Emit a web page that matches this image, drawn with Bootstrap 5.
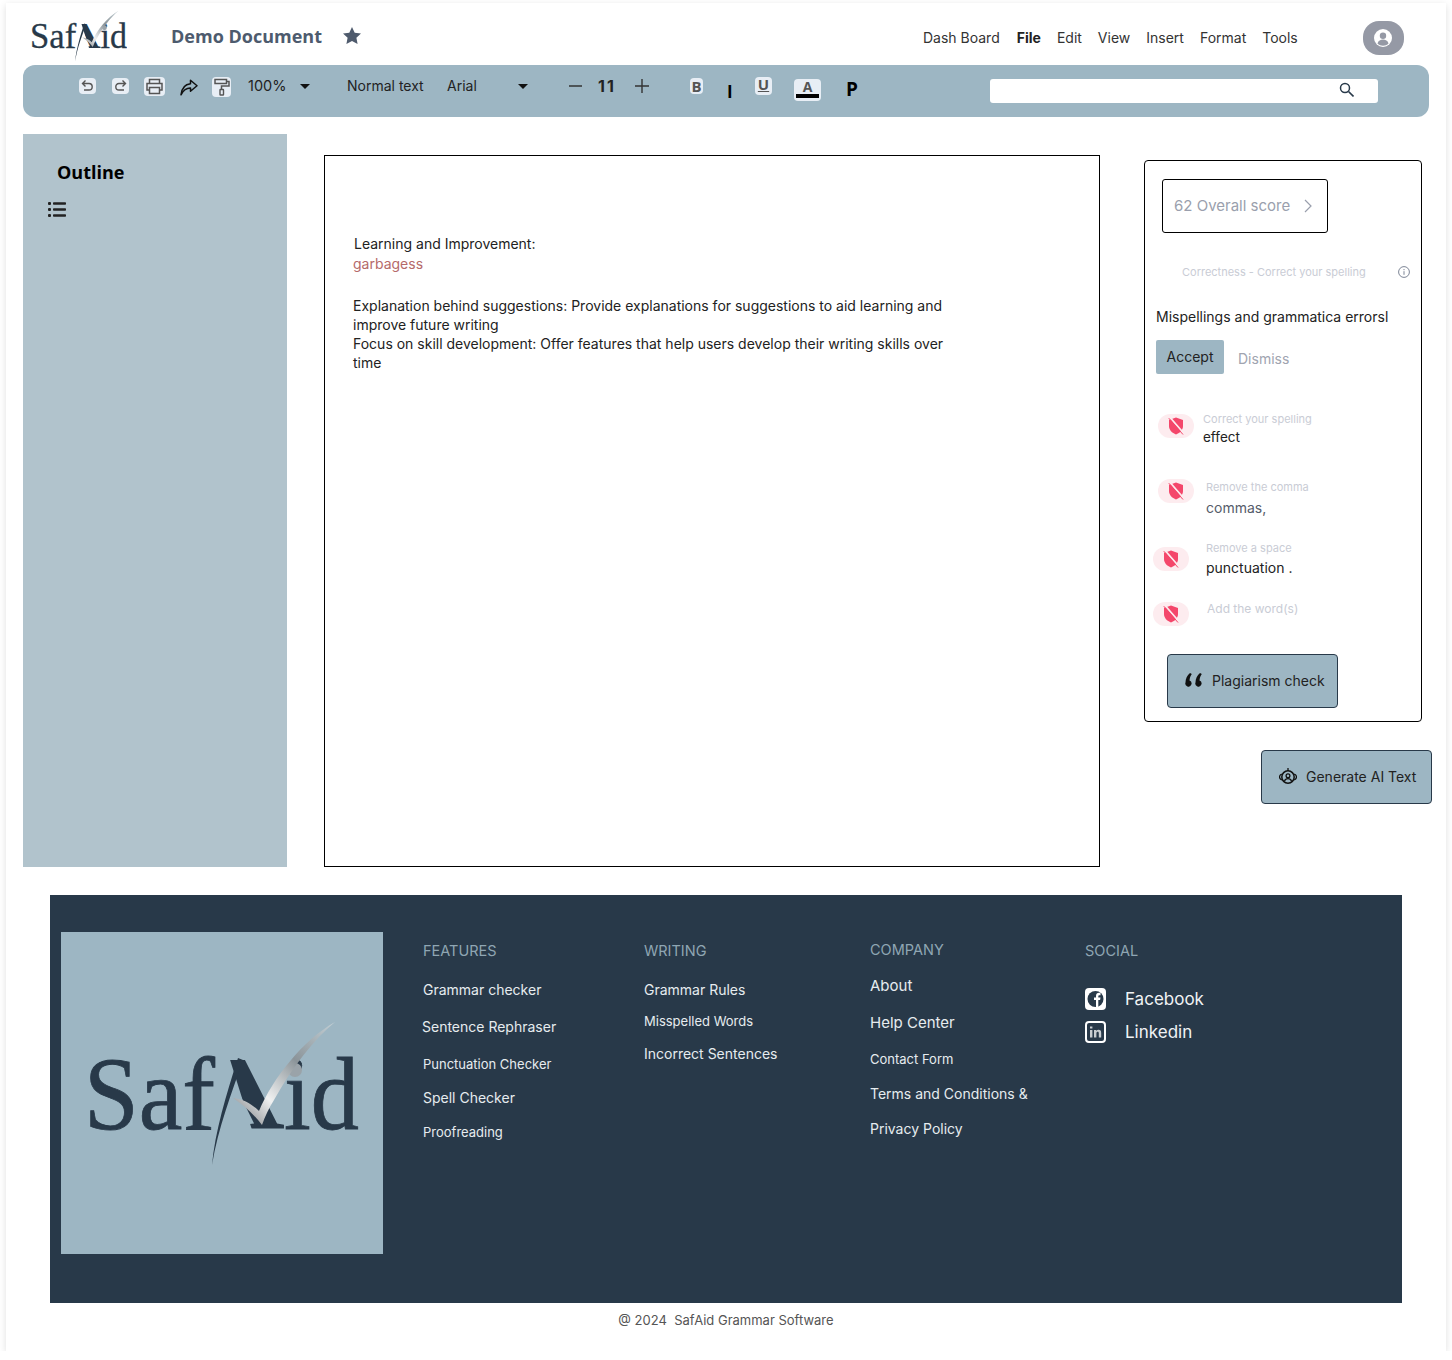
<!DOCTYPE html>
<html lang="en">
<head>
    <meta charset="UTF-8">
    <meta name="viewport" content="width=device-width, initial-scale=1.0">
    <title>SafAid - Demo Document</title>
    <link rel="stylesheet" href="https://cdn.jsdelivr.net/npm/bootstrap@5.3.0/dist/css/bootstrap.min.css">
    <style>
        body { font-family: Inter, sans-serif; background: #fff; color: #222; }
        .page-frame { margin: 3px 6px 0; width: 1440px; height: 1348px; background: #fff; box-shadow: 0 2px 7px rgba(0,0,0,.13); overflow: hidden; }

        .top-head { height: 62px; padding-left: 25px; }
        .head-logo { width: 96px; height: 53px; margin-top: 7px; }
        .doc-title { margin: 20px 0 0 44px; font: 700 18px/26px "Open Sans", sans-serif; color: #4d5b6e; width: 151px; white-space: nowrap; }
        .head-star { margin: 24px 0 0 21px; }
        .top-nav { margin: 25px 0 0 562px; }
        .top-nav .nav-link { padding: 0; font-size: 14px; line-height: 20px; color: #333; }
        .top-nav .nav-link.on { font-weight: 700; color: #222; margin-left: 1px; }
        .avatar-pill { width: 41px; height: 34px; margin: 18px 0 0 65px; background: #9599a5; border-radius: 16px; }

        .tool-bar { margin: 0 17px; height: 52px; background: #9db6c3; border-radius: 12px; }
        .tool-bar > * { flex: none; }
        .tb-txt { font-size: 14px; line-height: 20px; margin-top: 11px; color: #222; white-space: nowrap; }
        .tb-box { background: #e8eef5; border-radius: 4px; }
        .tb-undo { margin: 13px 0 0 56px; }
        .tb-redo { margin: 13px 0 0 16px; }
        .tb-print { margin: 12px 0 0 15px; }
        .tb-share { margin: 14px 0 0 15px; }
        .tb-roller { margin: 12px 0 0 14px; }
        .tb-zoom { margin-left: 17px; width: 38px; font-size: 14.5px; }
        .tb-caret { width: 0; height: 0; border-left: 5px solid transparent; border-right: 5px solid transparent; border-top: 5px solid #111; margin-top: 19px; }
        .tb-caret1 { margin-left: 14px; }
        .tb-style { margin-left: 37px; width: 77px; }
        .tb-font { margin-left: 23px; width: 31px; }
        .tb-caret2 { margin-left: 40px; }
        .tb-minus { margin: 15px 0 0 41px; }
        .tb-size { margin: 11px 0 0 16px; width: 18px; font: 700 16px/20px Inter, sans-serif; letter-spacing: 2px; color: #222; white-space: nowrap; }
        .tb-plus { margin: 14px 0 0 19px; }
        .tb-b { margin: 13px 0 0 41px; width: 13px; height: 16px; font: 700 15px/16px "Open Sans", sans-serif; color: #555; text-align: center; }
        .tb-i { margin: 17px 0 0 24px; width: 4px; font: 700 17px/20px "Open Sans", sans-serif; color: #000; }
        .tb-u { margin: 12px 0 0 24px; width: 17px; height: 18px; font: 700 15px/15px "Open Sans", sans-serif; color: #555; text-align: center; text-decoration: underline; }
        .tb-a { margin: 14px 0 0 22px; width: 27px; height: 22px; font: 700 14px/15px "Open Sans", sans-serif; color: #555; text-align: center; }
        .tb-a i { display: block; height: 4px; margin: 0 2px; background: #000; }
        .tb-p { margin: 12px 0 0 25px; width: 12px; font: 700 19px/24px "Open Sans", sans-serif; color: #000; }
        .tb-search { margin: 14px 0 0 132px; width: 388px; height: 24px; background: #fff; border-radius: 3px; padding: 3px 24px 0 0; }

        .side-panel { margin: 17px 0 0 17px; width: 264px; height: 733px; background: #b1c3cc; padding: 25px 0 0 25px; }
        .side-panel h2 { font: 700 18px/26px "Open Sans", sans-serif; color: #000; margin: 0 0 17px 9px; }
        .doc-sheet { margin: 38px 0 0 37px; width: 776px; height: 712px; border: 1px solid #000; padding: 78px 0 0 28px; font-size: 14px; line-height: 19px; color: #222; }
        .doc-sheet p { margin: 0; width: 600px; }
        .doc-sheet .first-line { margin-left: 1px; }
        .doc-sheet .typo { color: #b56a6a; margin: 1px 0 23px; }

        .right-col { margin: 43px 0 0 44px; width: 288px; }
        .check-panel { width: 278px; height: 562px; border: 1px solid #000; border-radius: 4px; }
        .score-box { margin: 18px 0 0 17px; width: 166px; height: 54px; border: 1px solid #000; border-radius: 3px; padding: 0 15px 0 11px; font-size: 15px; color: #9a9fad; }
        .correct-line { margin: 31px 11px 0 37px; font-size: 11px; line-height: 16px; color: #c9ccd5; }
        .miss-title { margin: 27px 0 0 11px; font-size: 14px; line-height: 20px; color: #222; white-space: nowrap; }
        .act-row { margin: 13px 0 0 11px; }
        .btn.btn-accept { width: 68px; height: 34px; padding: 0; background: #9db6c3; border: 0; border-radius: 2px; font-size: 14px; line-height: 34px; color: #222; }
        .dismiss-lnk { margin: 9px 0 0 14px; font-size: 14px; line-height: 20px; color: #a0a4b0; }
        .shield-pill { flex: none; width: 36px; height: 24px; background: #fdecef; border-radius: 12px; }
        .iss-title { font-size: 11px; line-height: 14px; color: #c9ccd5; white-space: nowrap; }
        .iss-val { font-size: 14px; line-height: 20px; color: #222; white-space: nowrap; }
        .iss-1 { margin: 38px 0 0 13px; }
        .iss-1 .shield-pill { margin-top: 2px; }
        .iss-1 .iss-txt { margin-left: 9px; }
        .iss-1 .iss-val { margin-top: 1px; font-size: 13.5px; }
        .iss-2 { margin: 32px 0 0 13px; }
        .iss-2 .iss-txt { margin: 1px 0 0 12px; }
        .iss-2 .iss-val { margin-top: 4px; color: #555c6a; }
        .iss-3 { margin: 23px 0 0 8px; }
        .iss-3 .shield-pill { margin-top: 6px; }
        .iss-3 .iss-txt { margin-left: 17px; }
        .iss-3 .iss-val { margin-top: 3px; }
        .iss-4 { margin: 22px 0 0 8px; }
        .iss-4 .shield-pill { margin-top: 2px; }
        .iss-4 .iss-txt { margin-left: 18px; font-size: 12px; line-height: 18px; color: #c9ccd5; }
        .btn.act-big { width: 171px; height: 54px; padding: 0 0 2px 17px; background: #9db6c3; border: 1px solid #283949; border-radius: 4px; font-size: 14px; color: #222; gap: 9px; }
        .plag-btn { margin: 28px 0 0 22px; }
        .gen-btn { margin: 28px 0 0 117px; }

        .site-foot { margin: 28px 0 0 44px; width: 1352px; height: 408px; background: #283949; padding: 37px 0 0 11px; }
        .foot-logo { width: 322px; height: 322px; background: #9db6c3; padding: 88px 0 0 26px; }
        .foot-col { padding-top: 9px; font-size: 14px; line-height: 20px; color: #e6ecef; }
        .foot-col h3 { font: 400 14.5px/20px Inter, sans-serif; color: #8fa6b3; margin: 0 0 19px; }
        .foot-col ul { margin: 0; padding: 0; list-style: none; }
        .col-a { margin-left: 40px; width: 221px; }
        .col-b { width: 226px; }
        .col-c { width: 215px; }
        .col-c h3 { margin: -1px 0 16px; }
        .col-d h3 { margin-bottom: 26px; }
        .g11 { margin-bottom: 11px; } .g13 { margin-bottom: 13px; } .g14 { margin-bottom: 14px; }
        .g15 { margin-bottom: 15px; } .g16 { margin-bottom: 16px; } .g17 { margin-bottom: 17px; }
        .t13 { font-size: 13px; }
        .t15 { font-size: 15px; }
        .nudge { margin-left: -1px; }
        .soc-row { height: 24px; gap: 19px; font-size: 17px; line-height: 24px; color: #f0f3f5; margin-bottom: 9px; }
        .copy-line { margin-top: 7px; font-size: 13px; line-height: 20px; color: #555; }
    </style>
</head>
<body>
    <svg width="0" height="0" class="d-block">
        <defs>
            <linearGradient id="checkFill" gradientUnits="userSpaceOnUse" x1="146" y1="105" x2="248" y2="2">
                <stop offset="0" stop-color="#6f7479"/>
                <stop offset=".3" stop-color="#f0f1f1"/>
                <stop offset=".62" stop-color="#8b9499"/>
                <stop offset="1" stop-color="#c4d0d6"/>
            </linearGradient>
            <clipPath id="markClip"><path d="M140 30H185L206 110H165Z"/></clipPath>
            <symbol id="safLogo" viewBox="0 0 272 150">
                <text x="-3" y="109" font-family="'Liberation Serif', serif" font-size="104" fill="#283949" stroke="#283949" stroke-width=".8" textLength="131" lengthAdjust="spacingAndGlyphs">Saf</text>
                <text x="197" y="109" font-family="'Liberation Serif', serif" font-size="104" fill="#283949" stroke="#283949" stroke-width=".8" textLength="75" lengthAdjust="spacingAndGlyphs">id</text>
                <text x="98" y="109" font-family="'Liberation Serif', serif" font-weight="700" font-size="104" fill="#283949" textLength="100" lengthAdjust="spacingAndGlyphs" clip-path="url(#markClip)">A</text>
                <path d="M156 40C145 72 131 108 125 145C128 112 139 75 151 38Z" fill="#283949"/>
                <circle cx="208" cy="50" r="7" fill="#9aa3a9"/>
                <path d="M146 78C157 79 166 85 172 91C186 58 216 20 248 2C226 20 205 48 187 80C182 88 178 96 175 105C166 93 156 85 146 78Z" fill="url(#checkFill)"/>
            </symbol>
            <symbol id="shieldOff" viewBox="0 0 16 18">
                <path d="M8 .5 15 3v6c0 4-3 7-7 8.500C4 16 1 13 1 9V3Z" fill="#f4476b"/>
                <path d="M2 .5 16 16.500" stroke="#fdecef" stroke-width="1.800"/>
                <path d="M.8 1.200 15 17.500" stroke="#f4476b" stroke-width="1"/>
            </symbol>
        </defs>
    </svg>

    <div class="page-frame">
        <header class="top-head d-flex align-items-start">
            <svg class="head-logo" role="img" aria-label="SafAid"><use href="#safLogo"/></svg>
            <div class="doc-title">Demo Document</div>
            <svg class="head-star" width="18" height="17" viewBox="0 0 18 17"><path d="M9 0l2.700 5.700 6.300.8-4.600 4.300 1.200 6.200L9 14l-5.600 3 1.200-6.200L0 6.500l6.300-.8z" fill="#4f5b6d"/></svg>
            <nav class="nav gap-3 top-nav">
                <a class="nav-link" href="#">Dash Board</a>
                <a class="nav-link on" href="#">File</a>
                <a class="nav-link" href="#">Edit</a>
                <a class="nav-link" href="#">View</a>
                <a class="nav-link" href="#">Insert</a>
                <a class="nav-link" href="#">Format</a>
                <a class="nav-link" href="#">Tools</a>
            </nav>
            <div class="avatar-pill d-flex align-items-center justify-content-center">
                <svg width="20" height="20" viewBox="0 0 20 20"><circle cx="10" cy="10" r="9" fill="#fff"/><circle cx="10" cy="7.800" r="3.200" fill="#9599a5"/><path d="M4.500 15.500c.8-3 3-4 5.500-4s4.700 1 5.500 4c-1.400 1.500-3.400 2.200-5.500 2.200s-4.100-.7-5.500-2.200z" fill="#9599a5"/></svg>
            </div>
        </header>

        <div class="tool-bar d-flex align-items-start">
            <svg class="tb-undo" width="17" height="16" viewBox="0 0 17 16"><rect width="17" height="16" rx="4" fill="#e8eef5"/><path d="M6.500 2.500 3.500 5.500l3 3M3.800 5.500h6.200c2 0 3.200 1.400 3.200 3.200s-1.200 3.300-3.200 3.300H5" fill="none" stroke="#555" stroke-width="1.400"/></svg>
            <svg class="tb-redo" width="17" height="16" viewBox="0 0 17 16"><rect width="17" height="16" rx="4" fill="#e8eef5"/><path d="M10.500 2.500l3 3-3 3M13.200 5.500H7C5 5.500 3.800 6.900 3.800 8.700S5 12 7 12h5" fill="none" stroke="#555" stroke-width="1.400"/></svg>
            <svg class="tb-print" width="21" height="19" viewBox="0 0 21 19"><rect width="21" height="19" rx="4" fill="#e8eef5"/><path d="M5.500 6V2.500h10V6M5.500 13H3V6.500h15V13h-2.500M5.500 10.500h10v6h-10z" fill="none" stroke="#555" stroke-width="1.500"/></svg>
            <svg class="tb-share" width="18" height="17" viewBox="0 0 18 17"><path d="M10.500 1.200 17 6.800l-6.500 5.500V9C6 8.900 3.500 11 1 15.800 1.700 9.500 5 5.200 10.500 4.700z" fill="none" stroke="#111" stroke-width="1.500" stroke-linejoin="round"/></svg>
            <svg class="tb-roller" width="19" height="20" viewBox="0 0 19 20"><rect width="19" height="20" rx="4" fill="#e8eef5"/><path d="M3 2.500h11.500v4H3zM14.500 4.500H17v4.500H9.500v3" fill="none" stroke="#555" stroke-width="1.500"/><rect x="8" y="12.500" width="3.500" height="5.500" rx=".5" fill="none" stroke="#555" stroke-width="1.400"/></svg>
            <span class="tb-txt tb-zoom">100%</span>
            <span class="tb-caret tb-caret1"></span>
            <span class="tb-txt tb-style">Normal text</span>
            <span class="tb-txt tb-font">Arial</span>
            <span class="tb-caret tb-caret2"></span>
            <svg class="tb-minus" width="13" height="13" viewBox="0 0 13 13"><path d="M0 6h13" stroke="#333" stroke-width="1.500"/></svg>
            <span class="tb-size">11</span>
            <svg class="tb-plus" width="14" height="14" viewBox="0 0 14 14"><path d="M0 7h14M7 0v14" stroke="#333" stroke-width="1.400"/></svg>
            <span class="tb-box tb-b">B</span>
            <span class="tb-i">I</span>
            <span class="tb-box tb-u">U</span>
            <span class="tb-box tb-a">A<i></i></span>
            <span class="tb-p">P</span>
            <div class="tb-search d-flex justify-content-end">
                <svg width="15" height="15" viewBox="0 0 15 15"><circle cx="6" cy="6" r="4.500" fill="none" stroke="#283949" stroke-width="1.500"/><path d="M9.500 9.500 14.500 14.500" stroke="#283949" stroke-width="1.600"/></svg>
            </div>
        </div>

        <div class="d-flex align-items-start">
            <aside class="side-panel">
                <h2>Outline</h2>
                <svg class="d-block" width="18" height="15" viewBox="0 0 18 15"><g fill="#222"><rect y="0" width="3" height="3" rx="1"/><rect y="6" width="3" height="3" rx="1"/><rect y="12" width="3" height="3" rx="1"/><rect x="5" y=".2" width="13" height="2.600" rx=".8"/><rect x="5" y="6.200" width="13" height="2.600" rx=".8"/><rect x="5" y="12.200" width="13" height="2.600" rx=".8"/></g></svg>
            </aside>

            <main class="doc-sheet">
                <p class="first-line">Learning and Improvement:</p>
                <p class="typo">garbagess</p>
                <p>Explanation behind suggestions: Provide explanations for suggestions to aid learning and improve future writing</p>
                <p>Focus on skill development: Offer features that help users develop their writing skills over time</p>
            </main>

            <div class="right-col">
                <section class="check-panel">
                    <div class="score-box d-flex align-items-center justify-content-between">
                        <span>62 Overall score</span>
                        <svg width="8" height="14" viewBox="0 0 8 14"><path d="M1 1l6 6-6 6" fill="none" stroke="#9a9fad" stroke-width="1.200"/></svg>
                    </div>
                    <div class="correct-line d-flex justify-content-between align-items-center">
                        <span>Correctness - Correct your spelling</span>
                        <svg width="12" height="12" viewBox="0 0 12 12"><circle cx="6" cy="6" r="5.400" fill="none" stroke="#7d8596"/><path d="M6 5.200v3.600M6 3v1.200" stroke="#7d8596"/></svg>
                    </div>
                    <div class="miss-title">Mispellings and grammatica errorsl</div>
                    <div class="act-row d-flex align-items-start">
                        <button type="button" class="btn btn-accept">Accept</button>
                        <span class="dismiss-lnk">Dismiss</span>
                    </div>
                    <div class="iss-1 d-flex">
                        <span class="shield-pill d-flex align-items-center justify-content-center"><svg width="16" height="18"><use href="#shieldOff"/></svg></span>
                        <div class="iss-txt"><div class="iss-title">Correct your spelling</div><div class="iss-val">effect</div></div>
                    </div>
                    <div class="iss-2 d-flex">
                        <span class="shield-pill d-flex align-items-center justify-content-center"><svg width="16" height="18"><use href="#shieldOff"/></svg></span>
                        <div class="iss-txt"><div class="iss-title">Remove the comma</div><div class="iss-val">commas,</div></div>
                    </div>
                    <div class="iss-3 d-flex">
                        <span class="shield-pill d-flex align-items-center justify-content-center"><svg width="16" height="18"><use href="#shieldOff"/></svg></span>
                        <div class="iss-txt"><div class="iss-title">Remove a space</div><div class="iss-val">punctuation .</div></div>
                    </div>
                    <div class="iss-4 d-flex">
                        <span class="shield-pill d-flex align-items-center justify-content-center"><svg width="16" height="18"><use href="#shieldOff"/></svg></span>
                        <div class="iss-txt">Add the word(s)</div>
                    </div>
                    <button type="button" class="btn act-big plag-btn d-flex align-items-center">
                        <svg width="18" height="14" viewBox="0 0 18 14"><path d="M5 0C2 2.500.6 5.500.5 9.500a3.100 3.100 0 1 0 4-1.900C4.700 5 5.400 2.800 6.800 1ZM15 0c-3 2.500-4.400 5.500-4.500 9.500a3.100 3.100 0 1 0 4-1.900c.2-2.600.9-4.800 2.300-6.600Z" fill="#111"/></svg>
                        <span>Plagiarism check</span>
                    </button>
                </section>
                <button type="button" class="btn act-big gen-btn d-flex align-items-center">
                    <svg width="18" height="16" viewBox="0 0 18 16"><path d="M9 0v3" stroke="#111" stroke-width="1.300"/><circle cx="9" cy="9" r="6.200" fill="none" stroke="#111" stroke-width="1.500"/><circle cx="9" cy="7.800" r="1.900" fill="none" stroke="#111" stroke-width="1.300"/><path d="M5.500 13c.6-1.600 2-2.300 3.500-2.300s2.900.7 3.500 2.300" fill="none" stroke="#111" stroke-width="1.300"/><path d="M2.800 6.200C1 6.800.5 8 .5 9s.5 2.200 2.300 2.800M15.200 6.200c1.800.6 2.300 1.800 2.300 2.800s-.5 2.200-2.300 2.800" fill="none" stroke="#111" stroke-width="1.300"/></svg>
                    <span>Generate AI Text</span>
                </button>
            </div>
        </div>

        <footer class="site-foot d-flex align-items-start">
            <div class="foot-logo">
                <svg class="d-block" width="272" height="150" role="img" aria-label="SafAid"><use href="#safLogo"/></svg>
            </div>
            <div class="foot-col col-a">
                <h3>FEATURES</h3>
                <ul>
                    <li class="g17">Grammar checker</li>
                    <li class="g17 nudge">Sentence Rephraser</li>
                    <li class="g14 t13">Punctuation Checker</li>
                    <li class="g14">Spell Checker</li>
                    <li class="t13">Proofreading</li>
                </ul>
            </div>
            <div class="foot-col col-b">
                <h3>WRITING</h3>
                <ul>
                    <li class="g11">Grammar Rules</li>
                    <li class="g13 t13">Misspelled Words</li>
                    <li>Incorrect Sentences</li>
                </ul>
            </div>
            <div class="foot-col col-c">
                <h3>COMPANY</h3>
                <ul>
                    <li class="g17 t15">About</li>
                    <li class="g16 t15">Help Center</li>
                    <li class="g15 t13">Contact Form</li>
                    <li class="g15">Terms and Conditions &amp;</li>
                    <li>Privacy Policy</li>
                </ul>
            </div>
            <div class="foot-col col-d">
                <h3>SOCIAL</h3>
                <div class="soc-row d-flex align-items-center">
                    <svg width="21" height="22" viewBox="0 0 21 22"><rect width="21" height="22" rx="4" fill="#fff"/><circle cx="10.500" cy="11" r="8" fill="#283949"/><path d="M11 19v-7H9V9.500h2V8c0-2 1.200-3.200 3-3.200h1.500v2.500h-1c-.8 0-1.200.4-1.200 1.100v1.100h2.200l-.4 2.500h-1.800v7Z" fill="#fff"/></svg>
                    <span>Facebook</span>
                </div>
                <div class="soc-row d-flex align-items-center">
                    <svg width="21" height="22" viewBox="0 0 21 22"><rect x="1" y="1" width="19" height="20" rx="3" fill="none" stroke="#fff" stroke-width="2"/><path d="M5 9h2.400v7.500H5zM5 5.500h2.400v2H5zM9 9h2.300v1c.5-.8 1.300-1.200 2.300-1.200 1.900 0 2.600 1.200 2.600 3.100v4.600h-2.400v-4.200c0-.9-.3-1.500-1.100-1.500-.9 0-1.300.6-1.300 1.600v4.100H9z" fill="#c9ced2"/></svg>
                    <span>Linkedin</span>
                </div>
            </div>
        </footer>

        <div class="copy-line text-center">@ 2024&nbsp; SafAid Grammar Software</div>
    </div>
    <script src="https://cdn.jsdelivr.net/npm/bootstrap@5.3.0/dist/js/bootstrap.bundle.min.js"></script>
</body>
</html>
